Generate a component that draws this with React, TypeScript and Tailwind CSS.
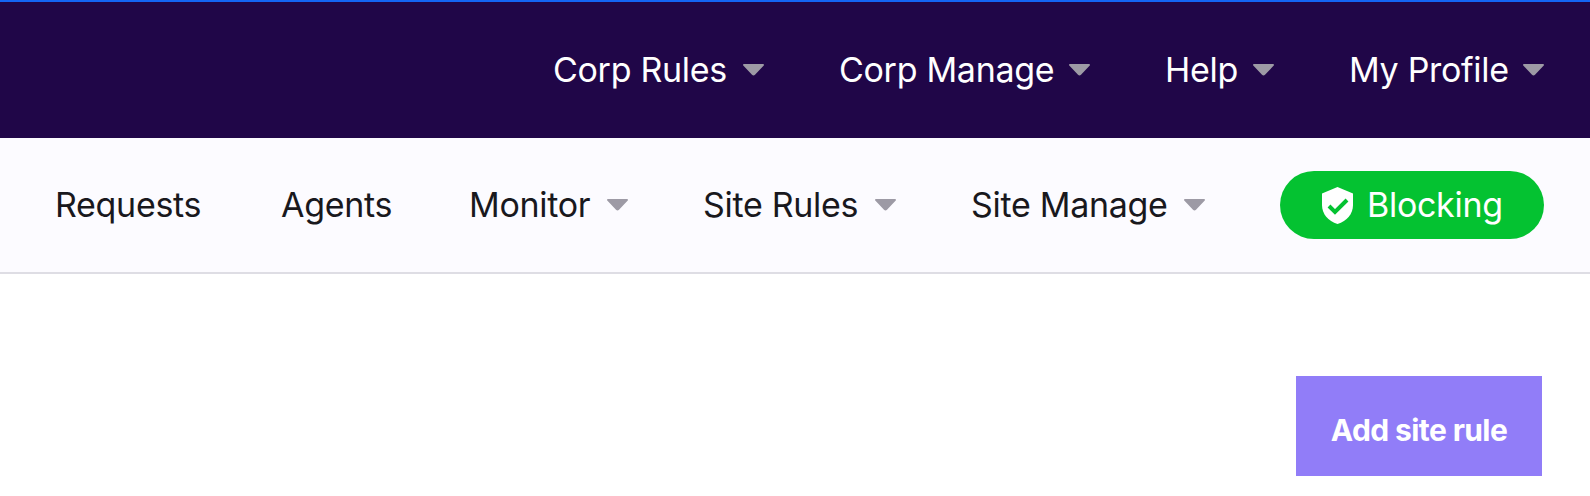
const Caret = () => (
  <svg className="h-[12px] w-[21px] shrink-0" viewBox="0 0 21 12" fill="#9d9aa5">
    <path d="M1.2 0H19.8C21 0 21.3 1 20.5 1.8L12 10.8Q10.5 12.4 9 10.8L.5 1.8C-.3 1 0 0 1.2 0Z" />
  </svg>
);

type ItemProps = { label: string; text: string; menu?: boolean; item: string };

const Item = ({ label, text, item, menu }: ItemProps) => (
  <a className={`flex shrink-0 items-center justify-between whitespace-nowrap ${item}`}>
    <span className={text}>{label}</span>
    {menu && <Caret />}
  </a>
);

export default function App() {
  return (
    <div className="flex h-[496px] w-[1590px] flex-col overflow-hidden bg-white font-['Inter',sans-serif] text-[34px] leading-[40px]">
      <header className="flex h-[138px] items-center border-t-2 border-[#1465f5] bg-[#200648] pl-[553px] text-white">
        <Item label="Corp Rules" text="tracking-[-0.3px]" item="mr-[75px] w-[211px]" menu />
        <Item label="Corp Manage" text="tracking-[-0.3px]" item="mr-[75px] w-[251px]" menu />
        <Item label="Help" text="tracking-[-0.3px]" item="mr-[75px] w-[109px]" menu />
        <Item label="My Profile" text="tracking-[-0.3px]" item="w-[195px]" menu />
      </header>
      <nav className="flex h-[136px] items-center border-b-2 border-[#dedde4] bg-[#fcfbff] pl-[55px] text-[#19181d]">
        <Item label="Requests" text="tracking-[-0.3px]" item="mr-[76px] w-[150px]" />
        <Item label="Agents" text="tracking-[-0.3px]" item="mr-[75px] w-[113px]" />
        <Item label="Monitor" text="tracking-[-0.3px]" item="mr-[75px] w-[159px]" menu />
        <Item label="Site Rules" text="tracking-[-0.3px]" item="mr-[75px] w-[193px]" menu />
        <Item label="Site Manage" text="tracking-[-0.3px]" item="mr-[75px] w-[234px]" menu />
        <div className="flex h-[68px] w-[264px] items-center rounded-full bg-[#04c231] pl-[42px] text-white">
          <svg className="mr-[14px] h-[37px] w-[31px]" viewBox="0 0 31 37">
            <path d="M15.5 0 31 6.5V18C31 27 25 34 15.5 37 6 34 0 27 0 18V6.5Z" fill="white" />
            <path d="m7 19 6 6 12-12" fill="none" stroke="#04c231" strokeWidth="4" />
          </svg>
          <span className="tracking-[-0.3px]">Blocking</span>
        </div>
      </nav>
      <main className="flex justify-end pt-[102px] pr-[48px]">
        <button className="h-[100px] w-[246px] whitespace-nowrap bg-[#917df8] pt-[7px] text-[30px] font-bold tracking-[-0.6px] text-white">Add site rule</button>
      </main>
    </div>
  );
}
